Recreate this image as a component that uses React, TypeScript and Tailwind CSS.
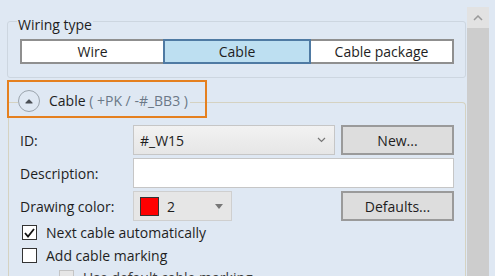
export default function App() {
  return (
    <div className="w-[495px] h-[276px] overflow-hidden bg-[#dfe8f3] flex text-[14px] text-[#1e1e1e] font-['Segoe_UI','Open_Sans',sans-serif]">
      <div className="w-[467px] flex flex-col">
        {/* Wiring type group */}
        <section className="shrink-0 mt-[21px] ml-[7px] w-[459px] h-[57px] border border-[#cdd6e0] rounded-[3px] flex flex-col">
          <div className="-mt-[7px] ml-[9px] px-[1px] w-fit h-[19px] leading-[19px] bg-[#dfe8f3]">Wiring type</div>
          <div className="mt-[5px] ml-[12px] flex h-[25px]">
            <button className="w-[143px] border-2 border-r-0 border-[#8f8f8f] bg-white">Wire</button>
            <button className="w-[148px] border-2 border-[#4f7aa3] bg-[#bddff1]">Cable</button>
            <button className="w-[143px] border-2 border-l-0 border-[#8f8f8f] bg-white">Cable package</button>
          </div>
        </section>

        {/* Cable panel */}
        <section className="shrink-0 mt-[24px] ml-[8px] w-[458px] h-[200px] border-t border-l border-r border-[#d5d2c1] rounded-tr-[4px] flex flex-col">
          <div className="shrink-0 -mt-[23px] -ml-[2px] w-[200px] h-[38px] border-2 border-[#e5801f] flex items-center pl-[9px] pt-[3px]">
            <span className="flex items-center gap-[9px] pr-[2px] bg-[#dfe8f3]">
              <span className="w-[22px] h-[22px] rounded-full border border-[#9ba4ad] flex items-center justify-center">
                <svg width="8" height="6" viewBox="0 0 8 6">
                  <path d="M1 5 L4 2 L7 5 Z" fill="#4a4f55" stroke="#4a4f55" strokeWidth="1.2" strokeLinejoin="round" />
                </svg>
              </span>
              <span className="whitespace-nowrap">
                Cable <span className="text-[#6b7887]">( +PK / -#_BB3 )</span>
              </span>
            </span>
          </div>

          <div className="shrink-0 mt-[7px] ml-[11px] grid grid-cols-[107px_202px_113px] gap-x-[6px] gap-y-[3px] auto-rows-[30px] items-center">
            <span>ID:</span>
            <div className="h-full border border-[#c6c6c6] bg-gradient-to-b from-[#f2f2f2] to-[#e6e6e6] flex items-center justify-between pl-[6px] pr-[8px]">
              <span>#_W15</span>
              <svg width="9" height="6" viewBox="0 0 9 6">
                <path d="M1 1 L4.5 4.5 L8 1" fill="none" stroke="#777" strokeWidth="1.2" />
              </svg>
            </div>
            <button className="h-full border-2 border-[#9a9a9a] bg-[#dddddd]">New...</button>

            <span>Description:</span>
            <div className="col-span-2 h-full border border-[#c6c6c6] bg-white" />

            <span>Drawing color:</span>
            <div className="h-full flex">
              <div className="w-[99px] h-full border border-[#cfcfcf] bg-[#e6e6e6] flex items-center pl-[6px] pr-[8px] gap-[8px]">
                <span className="w-[19px] h-[19px] border border-[#333] bg-[#ff0000]" />
                <span className="flex-1">2</span>
                <svg width="8" height="5" viewBox="0 0 8 5">
                  <path d="M0 0 L8 0 L4 5 Z" fill="#777" />
                </svg>
              </div>
            </div>
            <button className="h-full border-2 border-[#9a9a9a] bg-[#dddddd]">Defaults...</button>
          </div>

          <div className="shrink-0 ml-[13px] flex flex-col">
            <label className="h-[23px] flex items-center gap-[9px]">
              <span className="w-[15px] h-[15px] border border-[#333] bg-white flex items-center justify-center">
                <svg width="11" height="10" viewBox="0 0 11 10">
                  <path d="M1 5 L4 8.5 L10 1" fill="none" stroke="#111" strokeWidth="1.8" />
                </svg>
              </span>
              Next cable automatically
            </label>
            <label className="h-[23px] flex items-center gap-[9px]">
              <span className="w-[15px] h-[15px] border border-[#333] bg-white" />
              Add cable marking
            </label>
            <label className="ml-[37px] h-[20px] flex items-center gap-[9px] text-[#3a3a3a]">
              <span className="w-[15px] h-[15px] border border-[#c4c4c4] bg-[#e6e6e6]" />
              Use default cable marking
            </label>
          </div>
        </section>
      </div>

      {/* Scrollbar */}
      <div className="mt-[7px] w-[22px] flex flex-col">
        <div className="h-[21px] bg-[#e2e2e2] flex items-center justify-center">
          <svg width="10" height="6" viewBox="0 0 10 6">
            <path d="M1 5 L5 1 L9 5" fill="none" stroke="#9a9a9a" strokeWidth="1.5" />
          </svg>
        </div>
        <div className="flex-1 bg-[#cdcdcd]" />
      </div>
    </div>
  );
}
